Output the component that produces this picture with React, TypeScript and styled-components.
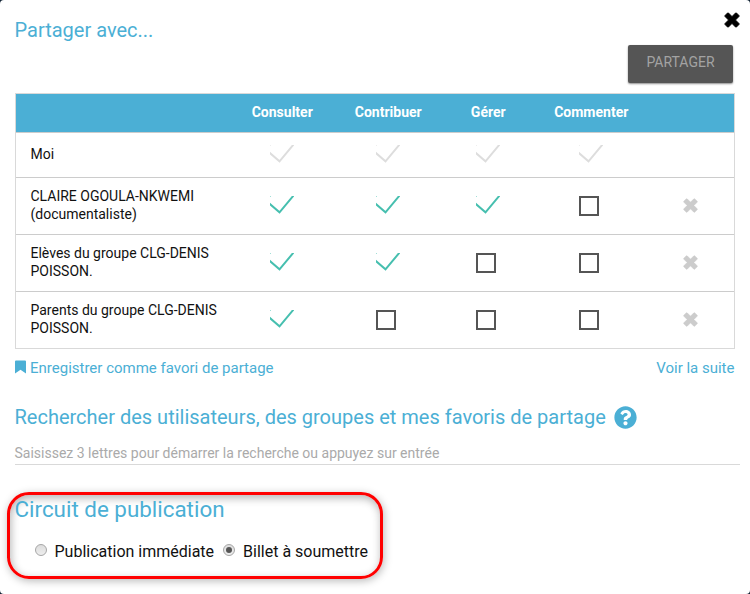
import React from 'react';
import styled, { createGlobalStyle } from 'styled-components';
import { FaQuestionCircle } from 'react-icons/fa';

const BLUE = '#4bafd5';

const Global = createGlobalStyle`
  * { box-sizing: border-box; }
  body { margin: 0; background: #123; font-family: Roboto, sans-serif; color: #000; }
  h1, h2 { margin: 0; font-weight: 400; color: ${BLUE}; }
  svg { display: block; flex: none; }
`;

const Dialog = styled.main`
  width: 750px;
  height: 594px;
  overflow: hidden;
  background: #fff;
  border-radius: 4px;
  padding: 0 15px;
`;

const Header = styled.header`
  display: flex;
  justify-content: space-between;
  height: 93px;
`;

const Title = styled.h1`
  margin-left: -0.5px;
  font-size: 20px;
  line-height: 24px;
  padding-top: 18px;
`;

const Actions = styled.div`
  display: flex;
  flex-direction: column;
  align-items: flex-end;
`;

const CloseButton = styled.button`
  border: 0;
  background: none;
  padding: 0;
  margin: 12px -4.5px 17px 0;
  height: 16px;
`;

const ShareButton = styled.button`
  width: 105px;
  height: 38px;
  margin-right: 2px;
  padding: 0 0 4px;
  border: 0;
  border-radius: 2px;
  background: #555;
  color: #a3a3a3;
  font: 400 14px/18px Roboto, sans-serif;
  box-shadow: 0 1px 2px rgba(0, 0, 0, 0.45);
`;

const Table = styled.section`
  width: 720px;
  border: 1px solid #d9d9d9;
`;

const Row = styled.div<{ $height: number }>`
  display: grid;
  grid-template-columns: 220px 92px 120px 80px 126px 80px;
  align-items: center;
  height: ${(p) => p.$height}px;
  & + & { border-top: 1px solid #ccc; }
`;

const HeadRow = styled(Row)`
  background: ${BLUE};
  color: #fff;
  font-size: 14px;
  font-weight: 700;
`;

const HeadCell = styled.div`
  text-align: center;
  line-height: 18px;
  padding: 0 0 2px 0.5px;
`;

const Name = styled.div`
  padding: 0 0 2px 14.5px;
  font-size: 14px;
  line-height: 18px;
  color: #111;
`;

const Mark = styled.div`
  width: 24px;
  height: 20px;
  justify-self: center;
`;

const Box = styled.div`
  width: 20px;
  height: 20px;
  border: 2px solid #555;
`;

const RemoveCell = styled.div`
  display: flex;
  justify-content: center;
  padding: 0 7px 2px 0;
`;

const Links = styled.div`
  display: flex;
  justify-content: space-between;
  height: 54px;
  padding: 9px 0.5px 0 0;
  font-size: 15px;
  line-height: 20px;
  color: ${BLUE};
`;

const Favorite = styled.span`
  display: flex;
  svg { margin: 2px 4.5px 0 -0.5px; }
`;

const SearchTitle = styled.h2`
  display: flex;
  align-items: center;
  gap: 8px;
  height: 28px;
  margin-left: -0.5px;
  font-size: 20px;
`;

const SearchField = styled.div`
  width: 725px;
  height: 34px;
  padding-top: 13px;
  border-bottom: 1px solid #d9d9d9;
  font-size: 14px;
  line-height: 18px;
  color: #aaa;
  text-indent: -0.5px;
`;

const Circuit = styled.section`
  width: 376px;
  height: 87px;
  margin: 27px 0 0 -8px;
  padding: 0 0 0 4.5px;
  border: 3px solid #f00;
  border-radius: 22px;
  box-shadow: 1px 2px 8px rgba(0, 0, 0, 0.28), inset 1px 3px 8px rgba(0, 0, 0, 0.3);
`;

const CircuitTitle = styled.h2`
  font-size: 22.4px;
  line-height: 28px;
`;

const Options = styled.div`
  display: flex;
  gap: 9px;
  padding: 18px 0 0 20px;
`;

const Option = styled.label`
  display: flex;
  gap: 8px;
  font-size: 16px;
  line-height: 22px;
  color: #111;
`;

const Radio = styled.span<{ $checked?: boolean }>`
  display: flex;
  align-items: center;
  justify-content: center;
  width: 12px;
  height: 12px;
  margin-top: 3px;
  border: 1px solid #a6a6a6;
  border-radius: 50%;
  background: linear-gradient(#ddd, #eee);
  &::after {
    content: '';
    width: 6px;
    height: 6px;
    border-radius: 50%;
    background: ${(p) => (p.$checked ? '#555' : 'transparent')};
  }
`;

const Cross = ({ size, color }: { size: number; color: string }) => (
  <svg width={size} height={size} viewBox="0 0 16 16" fill={color} stroke={color} strokeWidth="0.8" strokeLinejoin="round">
    <path d="M4.5 1 8 4.5 11.5 1Q12 .5 12.5 1L15 3.5Q15.5 4 15 4.5L11.5 8 15 11.5Q15.5 12 15 12.5L12.5 15Q12 15.5 11.5 15L8 11.5 4.5 15Q4 15.5 3.5 15L1 12.5Q.5 12 1 11.5L4.5 8 1 4.5Q.5 4 1 3.5L3.5 1Q4 .5 4.5 1Z" />
  </svg>
);

const Bookmark = () => (
  <svg width="11" height="14" viewBox="0 0 11 14" fill="currentColor">
    <path d="M1 .5h9q1 0 1 1v12L5.5 9.8 0 13.5v-12q0-1 1-1Z" />
  </svg>
);

const Check = ({ color }: { color: string }) => (
  <svg width="24" height="20" viewBox="0 0 24 20" fill="none">
    <path d="M-1 7.3 9.5 16.3 24-1" stroke={color} strokeWidth="2" />
    <path d="M0 .5h1" stroke={color} opacity=".5" />
  </svg>
);

const COLUMNS = ['Consulter', 'Contribuer', 'Gérer', 'Commenter'];

const SHARES = [
  { name: 'Moi', rights: 4, own: true },
  { name: 'CLAIRE OGOULA-NKWEMI (documentaliste)', rights: 3 },
  { name: 'Elèves du groupe CLG-DENIS POISSON.', rights: 2 },
  { name: 'Parents du groupe CLG-DENIS POISSON.', rights: 1 },
];

export default function App() {
  return (
    <>
      <Global />
      <Dialog>
        <Header>
          <Title>Partager avec...</Title>
          <Actions>
            <CloseButton aria-label="Fermer"><Cross size={16} color="#000" /></CloseButton>
            <ShareButton>PARTAGER</ShareButton>
          </Actions>
        </Header>
        <Table>
          <HeadRow $height={38}>
            <span />
            {COLUMNS.map((c) => <HeadCell key={c}>{c}</HeadCell>)}
          </HeadRow>
          {SHARES.map((s) => (
            <Row key={s.name} $height={s.own ? 45 : 57}>
              <Name>{s.name}</Name>
              {COLUMNS.map((c, i) => (
                <Mark key={c}>
                  {i < s.rights ? <Check color={s.own ? '#ddd' : '#46bfaf'} /> : <Box />}
                </Mark>
              ))}
              {!s.own && <RemoveCell><Cross size={15} color="#ccc" /></RemoveCell>}
            </Row>
          ))}
        </Table>
        <Links>
          <Favorite><Bookmark />Enregistrer comme favori de partage</Favorite>
          <span>Voir la suite</span>
        </Links>
        <SearchTitle>
          Rechercher des utilisateurs, des groupes et mes favoris de partage
          <FaQuestionCircle size={23} />
        </SearchTitle>
        <SearchField>Saisissez 3 lettres pour démarrer la recherche ou appuyez sur entrée</SearchField>
        <Circuit>
          <CircuitTitle>Circuit de publication</CircuitTitle>
          <Options>
            <Option><Radio />Publication immédiate</Option>
            <Option><Radio $checked />Billet à soumettre</Option>
          </Options>
        </Circuit>
      </Dialog>
    </>
  );
}
